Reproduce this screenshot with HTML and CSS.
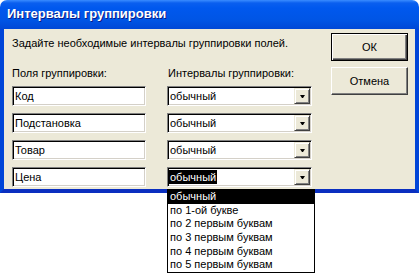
FILE: index.html
```html
<!DOCTYPE html>
<html lang="ru">
<head>
<meta charset="UTF-8">
<title>Интервалы группировки</title>
<link rel="stylesheet" href="styles.css">
</head>
<body>

<div class="window">
    <div class="titlebar">Интервалы группировки</div>
    <div class="frame">
        <div class="client">
            <div class="main">
                <div class="intro">Задайте необходимые интервалы группировки полей.</div>
                <div class="fields">
                    <div class="label">Поля группировки:</div>
                    <div class="label">Интервалы группировки:</div>

                    <div class="textbox">Код</div>
                    <div class="combo"><span class="value">обычный</span><span class="drop"><i></i></span></div>

                    <div class="textbox">Подстановка</div>
                    <div class="combo"><span class="value">обычный</span><span class="drop"><i></i></span></div>

                    <div class="textbox">Товар</div>
                    <div class="combo"><span class="value">обычный</span><span class="drop"><i></i></span></div>

                    <div class="textbox">Цена</div>
                    <div class="combo open">
                        <span class="value selected">обычный</span><span class="drop"><i></i></span>
                        <!-- open dropdown list -->
                        <ul class="list">
                            <li class="active">обычный</li>
                            <li>по 1-ой букве</li>
                            <li>по 2 первым буквам</li>
                            <li>по 3 первым буквам</li>
                            <li>по 4 первым буквам</li>
                            <li>по 5 первым буквам</li>
                        </ul>
                    </div>
                </div>
            </div>
            <div class="buttons">
                <div class="button default">ОК</div>
                <div class="button">Отмена</div>
            </div>
        </div>
    </div>
</div>

</body>
</html>
```

FILE: styles.css
```css
html,
body {
    height: 100%;
}

body {
    margin: 0;
    min-height: 278px;
    background-color: #ffffff;
    font-family: "Liberation Sans", Arial, sans-serif;
    font-size: 11px;
    color: #000000;
}

.window {
    width: 419px;
}

.titlebar {
    height: 29px;
    box-sizing: border-box;
    padding: 6px 0 0 7px;
    border-radius: 7px 7px 0 0;
    background: linear-gradient(to bottom, #3a8cff 0px, #0a5fef 3px, #0058ee 8px, #0055e5 20px, #0048d6 29px);
    color: #ffffff;
    font-size: 13px;
    font-weight: bold;
    line-height: 16px;
    text-shadow: 1px 1px 0 #0a1e8a;
}

.frame {
    border: 4px solid #0045d8;
    border-top: none;
    border-bottom-color: #0a2fc0;
}

.client {
    display: flex;
    justify-content: space-between;
    height: 160px;
    background-color: #ece9d8;
}

.main {
    padding: 7px 0 0 8px;
}

.intro {
    line-height: 14px;
    margin-bottom: 17px;
}

.fields {
    display: grid;
    grid-template-columns: 134px 145px;
    grid-template-rows: 12px repeat(4, 20px);
    column-gap: 21px;
    row-gap: 7px;
}

.label {
    line-height: 12px;
}

.label + .label {
    padding-left: 1px;
}

.textbox,
.combo {
    position: relative;
    display: flex;
    align-items: center;
    box-sizing: border-box;
    background-color: #ffffff;
    border: 1px solid;
    border-color: #808080 #ffffff #ffffff #808080;
    box-shadow: inset 1px 1px 0 #000000, inset -1px -1px 0 #d4d0c8;
    padding: 0 2px;
    line-height: 14px;
}

.combo {
    justify-content: space-between;
    padding: 0 1px;
}

.value {
    padding: 0 1px;
}

.value.selected {
    background-color: #000000;
    color: #ffffff;
}

.drop {
    display: flex;
    align-items: center;
    justify-content: center;
    width: 16px;
    height: 16px;
    box-sizing: border-box;
    background-color: #ece9d8;
    border: 1px solid;
    border-color: #ece9d8 #404040 #404040 #ece9d8;
    box-shadow: inset 1px 1px 0 #ffffff, inset -1px -1px 0 #808080;
}

.drop i {
    width: 1px;
    height: 0;
    border-left: 2px solid transparent;
    border-right: 2px solid transparent;
    border-top: 3px solid #000000;
    margin-top: 1px;
}

.list {
    position: absolute;
    z-index: 10;
    top: 21px;
    left: -1px;
    width: 146px;
    margin: 0;
    padding: 0;
    list-style: none;
    background-color: #ffffff;
    border: 1px solid #000000;
}

.list li {
    height: 13.7px;
    padding-left: 2px;
    line-height: 13px;
}

.list li.active {
    background-color: #000000;
    color: #ffffff;
}

.buttons {
    display: flex;
    flex-direction: column;
    gap: 6px;
    padding: 4px 7px 0 0;
}

.button {
    display: flex;
    align-items: center;
    justify-content: center;
    width: 77px;
    height: 28px;
    box-sizing: border-box;
    background-color: #ece9d8;
    border: 1px solid;
    border-color: #ffffff #404040 #404040 #ffffff;
    box-shadow: inset -1px -1px 0 #808080;
}

.button.default {
    border-color: #000000;
    box-shadow: inset 1px 1px 0 #ffffff, inset -1px -1px 0 #404040, inset -2px -2px 0 #808080;
}
```
